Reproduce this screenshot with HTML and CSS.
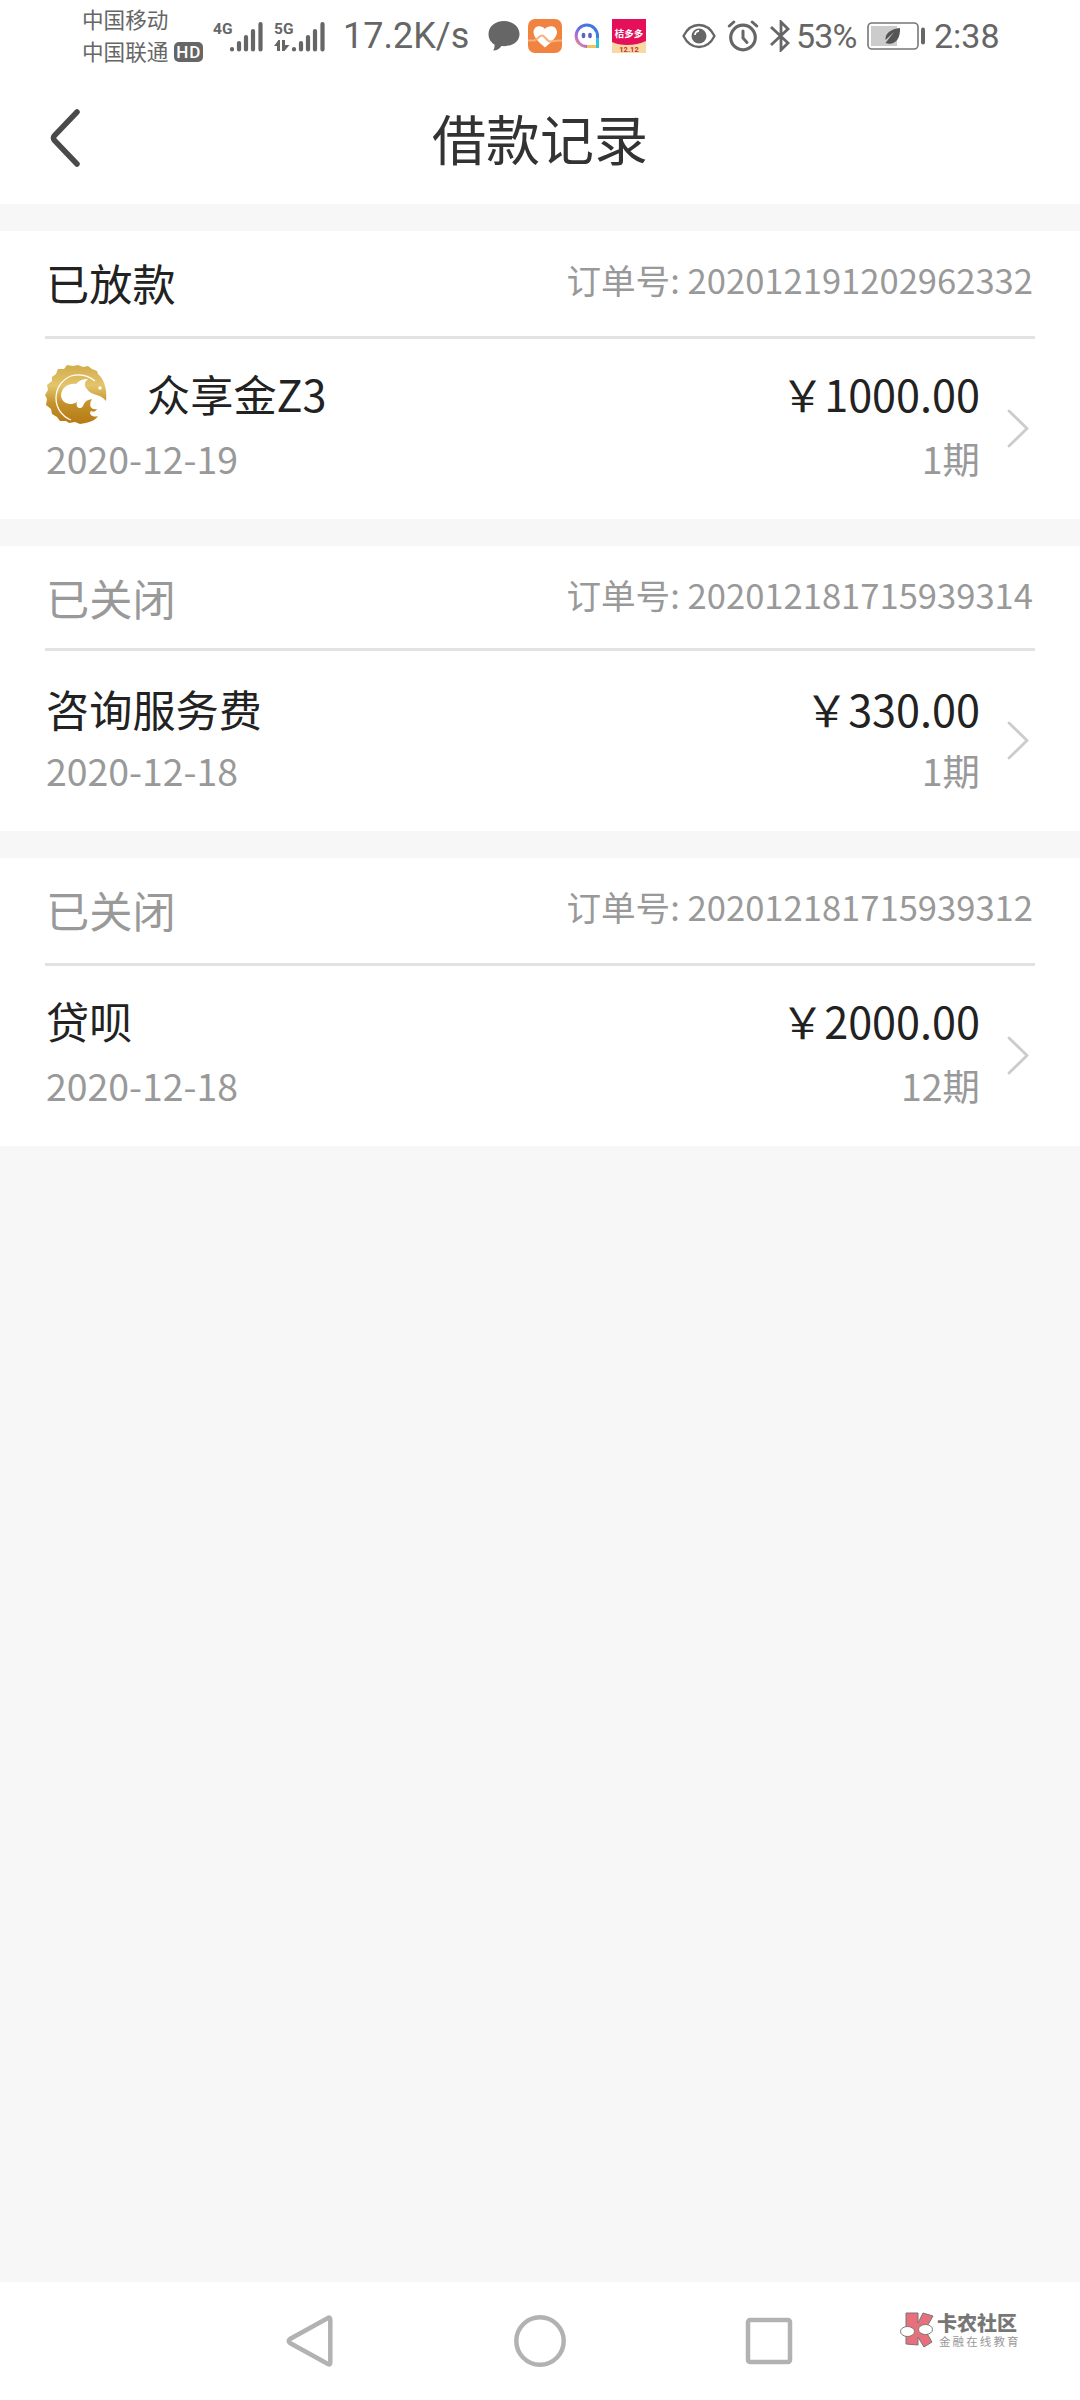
FILE: index.html
```html
<!DOCTYPE html>
<html lang="zh-CN">
<head>
  <meta charset="UTF-8">
  <meta name="viewport" content="width=device-width, initial-scale=1.0">
  <title>借款记录</title>
  <link rel="stylesheet" href="styles.css">
</head>
<body>
  <div class="statusbar">
    <div class="carriers">
      <div class="carrier">中国移动</div>
      <div class="carrier">中国联通<span class="hd">HD</span></div>
    </div>
    <svg class="signal" viewBox="0 0 54 36">
      <text x="1" y="16" class="net">4G</text>
      <g class="bars">
        <path d="M20 31v.5M27 25v6.500M34 19v12.500M41 13v18.500M48.500 6v25.500"/>
      </g>
    </svg>
    <svg class="signal signal-5g" viewBox="0 0 54 36">
      <text x="0" y="16" class="net">5G</text>
      <path fill="#666" d="M0 28l4.500-6h1.500v11H3v-5zM8 22h3v5h4.500l-5 6H8z"/>
      <g class="bars">
        <path d="M20 31v.5M27 25v6.500M34 19v12.500M41 13v18.500M48.500 6v25.500"/>
      </g>
    </svg>
    <span class="speed">17.2K/s</span>
    <svg class="ic-chat" viewBox="0 0 32 32">
      <path fill="#666" d="M16 1C7 1 .5 6.500.5 14c0 5 2.500 8.500 6 10.500.3 2-.2 4-1.300 6 4 0 6.500-2 8.300-4.500C24 27 31.500 22 31.500 14 31.500 6.500 25 1 16 1z"/>
    </svg>
    <svg class="ic-heart" viewBox="0 0 34 34">
      <rect width="34" height="34" rx="7" fill="#f08340"/>
      <path fill="#fff" d="M17 10c-3-4-11-4-11.500 3C5.500 19 12 24 17 28.500 22 24 29 19 29 13c-.5-7-9-7-12-3z"/>
      <path d="M0 21.500h6c3 0 5-5 8-5s5 6 8 6 2-1 12-1" fill="none" stroke="#f5b27c" stroke-width="2"/>
    </svg>
    <svg class="ic-ring" viewBox="0 0 26 26">
      <defs>
        <linearGradient id="ring" x1="1" y1="0" x2="0" y2="1">
          <stop offset="0" stop-color="#2f7fe6"/>
          <stop offset=".5" stop-color="#5d6fe0"/>
          <stop offset=".75" stop-color="#b66ad8"/>
          <stop offset="1" stop-color="#f0a060"/>
        </linearGradient>
      </defs>
      <path d="M23.500 23.500H13A10.700 10.700 0 1 1 23.500 13z" fill="#fff" stroke="url(#ring)" stroke-width="3"/>
      <path d="M13 23.500h10.500" stroke="#f2c35a" stroke-width="3"/>
      <path d="M23.500 15v10" stroke="#35c4d4" stroke-width="3"/>
      <path d="M9.500 11.500v2M16 11.500v2" stroke="#5a62c8" stroke-width="3.600" stroke-linecap="round"/>
    </svg>
    <svg class="ic-shop" viewBox="0 0 34 34">
      <rect width="34" height="34" fill="#e5105a"/>
      <path fill="#f6d9a4" d="M0 23c8 4 24 4 34-1v12H0z"/>
      <text x="17" y="17.500" text-anchor="middle" class="shop-name">桔多多</text>
      <text x="17" y="32.500" text-anchor="middle" class="shop-date">12.12</text>
    </svg>
    <svg class="ic-eye" viewBox="0 0 34 26">
      <path d="M1.500 13C5 6 10 2 17 2s12 4 15.500 11C29 20 24 24 17 24S5 20 1.500 13z" fill="none" stroke="#666" stroke-width="2.300"/>
      <circle cx="17" cy="13" r="7.500" fill="#666"/>
      <path d="M13 12a4 4 0 0 1 4-4" fill="none" stroke="#fff" stroke-width="1.800"/>
    </svg>
    <svg class="ic-alarm" viewBox="0 0 32 32">
      <g fill="none" stroke="#666" stroke-linecap="round">
        <circle cx="16" cy="17.500" r="12.300" stroke-width="3.200"/>
        <path d="M16 11v7l4 4.500" stroke-width="3"/>
        <path d="M2.300 6l4.500-4M29.700 6l-4.500-4" stroke-width="3"/>
      </g>
    </svg>
    <svg class="ic-bt" viewBox="0 0 20 32">
      <path d="M1 7l17 16-7 7V2l7 7L1 25" fill="none" stroke="#666" stroke-width="2.800"/>
    </svg>
    <span class="percent">53%</span>
    <svg class="ic-battery" viewBox="0 0 60 28">
      <rect x="1" y="1" width="50" height="26" rx="4" fill="none" stroke="#777" stroke-width="1.600"/>
      <rect x="4" y="4" width="26" height="20" fill="#ccc"/>
      <path fill="#555" d="M33 6c-9 1-15 5-14.500 12L27 10l-8.500 11 2 .5c8 1.500 13-5 12.500-15.500z"/>
      <path d="M56 7.500v13" stroke="#666" stroke-width="4" stroke-linecap="round"/>
    </svg>
    <span class="clock">2:38</span>
  </div>

  <header class="header">
    <svg class="back" viewBox="0 0 32 60">
      <path d="M28 4L5.500 27.500q-2 2.500 0 5L28 56" fill="none" stroke="#4a4a4a" stroke-width="5.500" stroke-linecap="round"/>
    </svg>
    <h1>借款记录</h1>
  </header>

  <main class="list">
    <section class="card">
      <div class="card-head">
        <span class="state active">已放款</span>
        <span class="order">订单号: 202012191202962332</span>
      </div>
      <div class="card-body">
        <div class="info">
          <div class="name">
            <svg class="logo" viewBox="0 0 62 60">
              <defs>
                <linearGradient id="gold" x1="0" y1="0" x2="0" y2="1">
                  <stop offset="0" stop-color="#d2ac4c"/>
                  <stop offset=".35" stop-color="#e3c56c"/>
                  <stop offset=".65" stop-color="#c4912b"/>
                  <stop offset="1" stop-color="#b67a14"/>
                </linearGradient>
              </defs>
              <path fill="url(#gold)" d="M61 37C62 29 61 17 53 10l-1-3-5-2-4-3-5 1-5-2-5 1-6-1-3 4-6 0-2 5-4 3 0 4-5 4 1 5-3 5 2 4-1 6 5 4 1 5 5 3 3 4 6 0 3 2 6-1 5 2C43 59 50 57 53 52 48 54 43 50 46 47Q50 49 52 45C46 46 43 42 47 35 41 36 40 38 38 42 36 46 30 44 32 38 24 43 16 38 16 31 17 22 25 19 31 20 34 16 39 15 43 15 39 18 39 22 42 25 46 32 55 29 61 37z"/>
              <path d="M26 56C6 48 6 20 26 12c10-3 18 0 24 5" fill="none" stroke="#fff" stroke-width="1.300"/>
              <circle cx="55" cy="24" r="1.700" fill="#fff"/>
            </svg>
            <span>众享金Z3</span>
          </div>
          <div class="date">2020-12-19</div>
        </div>
        <div class="sum">
          <div class="amount">￥1000.00</div>
          <div class="term">1期</div>
        </div>
        <svg class="arrow" viewBox="0 0 22 40"><path d="M2 2l18 17.500L2 37"/></svg>
      </div>
    </section>

    <section class="card card-short">
      <div class="card-head">
        <span class="state">已关闭</span>
        <span class="order">订单号: 202012181715939314</span>
      </div>
      <div class="card-body">
        <div class="info">
          <div class="name">咨询服务费</div>
          <div class="date">2020-12-18</div>
        </div>
        <div class="sum">
          <div class="amount">￥330.00</div>
          <div class="term">1期</div>
        </div>
        <svg class="arrow" viewBox="0 0 22 40"><path d="M2 2l18 17.500L2 37"/></svg>
      </div>
    </section>

    <section class="card">
      <div class="card-head">
        <span class="state">已关闭</span>
        <span class="order">订单号: 202012181715939312</span>
      </div>
      <div class="card-body">
        <div class="info">
          <div class="name">贷呗</div>
          <div class="date">2020-12-18</div>
        </div>
        <div class="sum">
          <div class="amount">￥2000.00</div>
          <div class="term">12期</div>
        </div>
        <svg class="arrow" viewBox="0 0 22 40"><path d="M2 2l18 17.500L2 37"/></svg>
      </div>
    </section>
  </main>

  <nav class="navbar">
    <svg viewBox="0 0 52 52"><path d="M43 3Q45.300 1.800 45.300 4.500v43q0 2.700-2.300 1.500L5 28q-2.600-2 0-4z"/></svg>
    <svg viewBox="0 0 52 52"><circle cx="26" cy="26" r="23.700"/></svg>
    <svg viewBox="0 0 52 52"><rect x="5" y="5" width="42" height="42" rx="2"/></svg>
    <div class="watermark">
      <svg viewBox="0 0 34 36">
        <path fill="#e8707c" stroke="#777" stroke-width="1" d="M6 1h12v10l5-10 10 3-8 14 7 12-8 5-6-10v8l-12-1z"/>
        <ellipse cx="7.500" cy="19.500" rx="7" ry="5" fill="#fff" stroke="#777"/>
        <ellipse cx="25.500" cy="17.500" rx="7" ry="5" fill="#fff" stroke="#777"/>
      </svg>
      <div>
        <div class="wm-title">卡农社区</div>
        <div class="wm-sub">金融在线教育</div>
      </div>
    </div>
  </nav>
</body>
</html>
```

FILE: styles.css
```css
* {
  margin: 0;
  padding: 0;
  box-sizing: border-box;
}

body {
  width: 1080px;
  height: 2400px;
  display: flex;
  flex-direction: column;
  font-family: "Noto Sans CJK SC", "Noto Sans", sans-serif;
  background: #f7f7f7;
  color: #222;
  overflow: hidden;
}

svg {
  display: block;
  flex: none;
}

/* status bar */
.statusbar {
  height: 72px;
  background: #fff;
  display: flex;
  align-items: center;
  padding-left: 82px;
  color: #666;
  white-space: nowrap;
}

.carriers {
  width: 130px;
  padding-bottom: 2px;
  font-size: 21.6px;
}

.carrier {
  display: flex;
  align-items: center;
  height: 32px;
  line-height: 32px;
}

.hd {
  width: 29px;
  height: 20px;
  margin: 2px 0 0 6px;
  border-radius: 5px;
  background: #666;
  color: #fff;
  font: 500 17px/20px Roboto, sans-serif;
  letter-spacing: 1px;
  text-align: center;
}

.signal {
  width: 54px;
  height: 36px;
}

.signal-5g {
  margin-left: 8px;
}

.net {
  font: 700 15.5px Roboto, sans-serif;
  fill: #666;
}

.bars path {
  fill: none;
  stroke: #666;
  stroke-width: 4.2;
  stroke-linecap: round;
}

.speed {
  width: 160px;
  padding-left: 15px;
  font: 36px/74px Roboto, sans-serif;
}

.ic-chat {
  width: 32px;
  height: 32px;
}

.ic-heart {
  width: 34px;
  height: 34px;
  margin-left: 8px;
}

.ic-ring {
  width: 26px;
  height: 26px;
  margin-left: 12px;
}

.ic-shop {
  width: 34px;
  height: 34px;
  margin-left: 12px;
}

.shop-name {
  font-size: 9.5px;
  font-weight: 700;
  fill: #fff;
}

.shop-date {
  font: 700 7.5px Roboto, sans-serif;
  fill: #c8302c;
}

.ic-eye {
  width: 34px;
  height: 26px;
  margin-left: 36px;
}

.ic-alarm {
  width: 32px;
  height: 32px;
  margin-left: 11px;
}

.ic-bt {
  width: 20px;
  height: 32px;
  margin-left: 11px;
}

.percent {
  width: 72px;
  padding-left: 6px;
  font: 34px/74px Roboto, sans-serif;
  letter-spacing: -0.8px;
}

.ic-battery {
  width: 60px;
  height: 28px;
  margin-left: 5px;
}

.clock {
  margin-left: 7px;
  font: 34px/74px Roboto, sans-serif;
}

/* title */
.header {
  height: 132px;
  padding: 0 49px;
  background: #fff;
  display: grid;
  grid-template-columns: 32px 1fr 32px;
  align-items: center;
}

.back {
  width: 32px;
  height: 60px;
}

.header h1 {
  font-size: 54px;
  font-weight: 400;
  line-height: 132px;
  text-align: center;
  color: #333;
}

/* records */
.list {
  flex: 1;
  padding-top: 27px;
}

.card {
  height: 288px;
  margin-bottom: 27px;
  padding: 0 45px;
  background: #fff;
}

.card-head {
  height: 108px;
  padding: 0 2px 0 1px;
  display: flex;
  justify-content: space-between;
  border-bottom: 3px solid #e2e2e2;
}

.state {
  font-size: 43.2px;
  line-height: 102px;
  color: #999;
}

.state.active {
  color: #222;
}

.order {
  font-size: 34.6px;
  line-height: 96px;
  color: #999;
}

.card-body {
  display: flex;
  padding-top: 22px;
}

.info {
  flex: 1;
  padding-left: 1px;
}

.name {
  display: flex;
  align-items: center;
  gap: 40px;
}

.name,
.amount {
  height: 64px;
  font-size: 43.2px;
  line-height: 64px;
}

.logo {
  width: 62px;
  height: 60px;
  margin: 2px 0 0 -1px;
}

.date,
.term {
  height: 66px;
  font-size: 37.44px;
  line-height: 66px;
  color: #999;
}

.sum {
  text-align: right;
}

.arrow {
  width: 22px;
  height: 40px;
  margin: 48px 6px 0 27px;
}

.arrow path {
  fill: none;
  stroke: #ccc;
  stroke-width: 2.8;
  stroke-linecap: round;
}

.card-short {
  height: 285px;
}

.card-short .card-head {
  height: 105px;
}

.card-short .card-body {
  padding-top: 25px;
}

.card-short .date,
.card-short .term {
  line-height: 60px;
}

.card-short .arrow {
  margin-top: 45px;
}

/* system navigation */
.navbar {
  position: relative;
  height: 118px;
  background: #fff;
  display: flex;
  align-items: center;
  justify-content: center;
  gap: 177px;
}

.navbar > svg {
  width: 52px;
  height: 52px;
  fill: none;
  stroke: #b2b2b2;
  stroke-width: 4.5;
}

.watermark {
  position: absolute;
  left: 900px;
  top: 30px;
  display: flex;
  gap: 3px;
  color: #777;
  white-space: nowrap;
}

.watermark svg {
  width: 34px;
  height: 36px;
}

.wm-title {
  font-size: 20px;
  font-weight: 900;
  line-height: 22px;
}

.wm-sub {
  padding-left: 2px;
  font-size: 11.5px;
  line-height: 14px;
  letter-spacing: 2.1px;
  color: #999;
}
```
